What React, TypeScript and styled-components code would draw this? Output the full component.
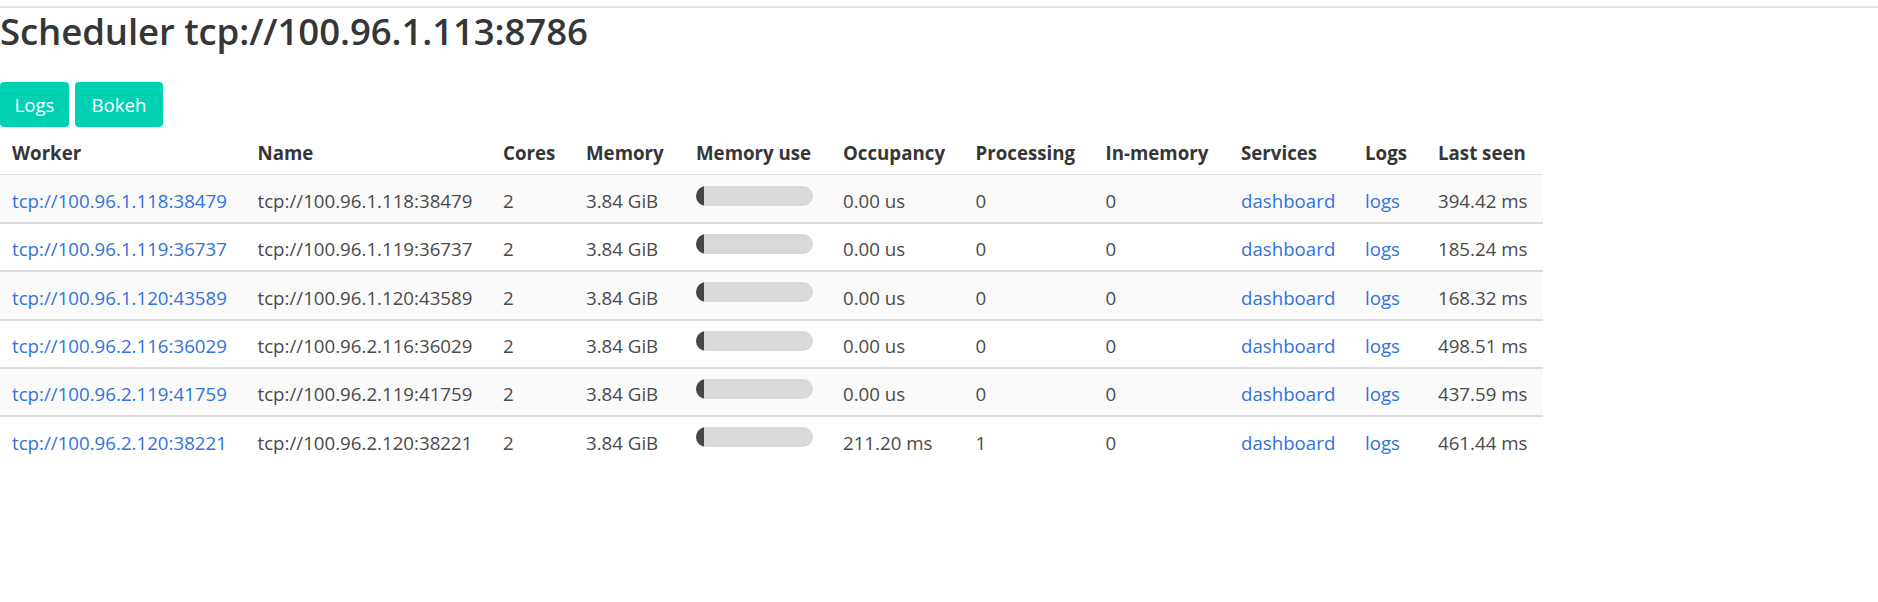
import React from "react";
import styled, { createGlobalStyle } from "styled-components";

const GlobalStyle = createGlobalStyle`
  html, body { margin: 0; padding: 0; background: #ffffff; }
  body {
    font-family: "Open Sans", "Noto Sans", "DejaVu Sans", sans-serif;
    color: #4a4a4a;
  }
  * { box-sizing: border-box; }
`;

const Page = styled.div`
  width: 1878px;
  display: flex;
  flex-direction: column;
`;

const Rule = styled.div`
  height: 2px;
  margin-top: 6px;
  background: #e4e4e4;
`;

const Title = styled.h1`
  margin: 3px 0 0;
  font-size: 36.6px;
  line-height: 41.6px;
  font-weight: 600;
  color: #363636;
  letter-spacing: -0.1px;
`;

const ButtonRow = styled.div`
  display: flex;
  gap: 6px;
  margin-top: 29px;
`;

const Button = styled.a<{ $w: number }>`
  display: inline-flex;
  align-items: center;
  justify-content: center;
  width: ${(p) => p.$w}px;
  height: 45px;
  padding-top: 1px;
  background: #00d1b2;
  color: #ffffff;
  border-radius: 4px;
  font-size: 18.7px;
  text-decoration: none;
  cursor: pointer;
`;

const Table = styled.table`
  width: 1543px;
  border-collapse: collapse;
  table-layout: fixed;
  font-size: 18.7px;
`;

const Col = styled.col<{ $w: number }>`
  width: ${(p) => p.$w}px;
`;

const Th = styled.th`
  text-align: left;
  font-weight: 700;
  color: #363636;
  padding: 12px 12px 7px;
  line-height: 28.8px;
  border-bottom: 1px solid #dedede;
  white-space: nowrap;
`;

const Row = styled.tr<{ $striped: boolean }>`
  background: ${(p) => (p.$striped ? "#fafafa" : "#ffffff")};
  border-bottom: 2px solid #dbdbdb;
  &:last-child { border-bottom: none; }
`;

const Td = styled.td`
  padding: 11.6px 12px 7.2px;
  line-height: 27.6px;
  vertical-align: top;
  white-space: nowrap;
  color: #4a4a4a;
`;

const Link = styled.a`
  color: #3273dc;
  text-decoration: none;
`;

const MemBar = styled.div`
  width: 117px;
  height: 20px;
  margin-top: -1.4px;
  border-radius: 10px;
  background: #d9d9d9;
  overflow: hidden;
  display: flex;
`;

const MemFill = styled.div`
  height: 100%;
  background: #464646;
`;

type Worker = {
  addr: string;
  occ: string;
  proc: string;
  seen: string;
};

const workers: Worker[] = [
  { addr: "tcp://100.96.1.118:38479", occ: "0.00 us", proc: "0", seen: "394.42 ms" },
  { addr: "tcp://100.96.1.119:36737", occ: "0.00 us", proc: "0", seen: "185.24 ms" },
  { addr: "tcp://100.96.1.120:43589", occ: "0.00 us", proc: "0", seen: "168.32 ms" },
  { addr: "tcp://100.96.2.116:36029", occ: "0.00 us", proc: "0", seen: "498.51 ms" },
  { addr: "tcp://100.96.2.119:41759", occ: "0.00 us", proc: "0", seen: "437.59 ms" },
  { addr: "tcp://100.96.2.120:38221", occ: "211.20 ms", proc: "1", seen: "461.44 ms" },
];

const cols = [245.5, 245.5, 83, 110, 147, 132.5, 130, 135.5, 124, 73, 117];
const headers = [
  "Worker",
  "Name",
  "Cores",
  "Memory",
  "Memory use",
  "Occupancy",
  "Processing",
  "In-memory",
  "Services",
  "Logs",
  "Last seen",
];

export default function App() {
  return (
    <Page>
      <GlobalStyle />
      <Rule />
      <Title>Scheduler tcp://100.96.1.113:8786</Title>
      <ButtonRow>
        <Button $w={69}>Logs</Button>
        <Button $w={88}>Bokeh</Button>
      </ButtonRow>
      <Table>
        <colgroup>
          {cols.map((w, i) => (
            <Col key={i} $w={w} />
          ))}
        </colgroup>
        <thead>
          <tr>
            {headers.map((h) => (
              <Th key={h}>{h}</Th>
            ))}
          </tr>
        </thead>
        <tbody>
          {workers.map((w, i) => (
            <Row key={w.addr} $striped={i % 2 === 0}>
              <Td>
                <Link>{w.addr}</Link>
              </Td>
              <Td>{w.addr}</Td>
              <Td>2</Td>
              <Td>3.84 GiB</Td>
              <Td>
                <MemBar>
                  <MemFill style={{ width: 8 }} />
                </MemBar>
              </Td>
              <Td>{w.occ}</Td>
              <Td>{w.proc}</Td>
              <Td>0</Td>
              <Td>
                <Link>dashboard</Link>
              </Td>
              <Td>
                <Link>logs</Link>
              </Td>
              <Td>{w.seen}</Td>
            </Row>
          ))}
        </tbody>
      </Table>
    </Page>
  );
}
